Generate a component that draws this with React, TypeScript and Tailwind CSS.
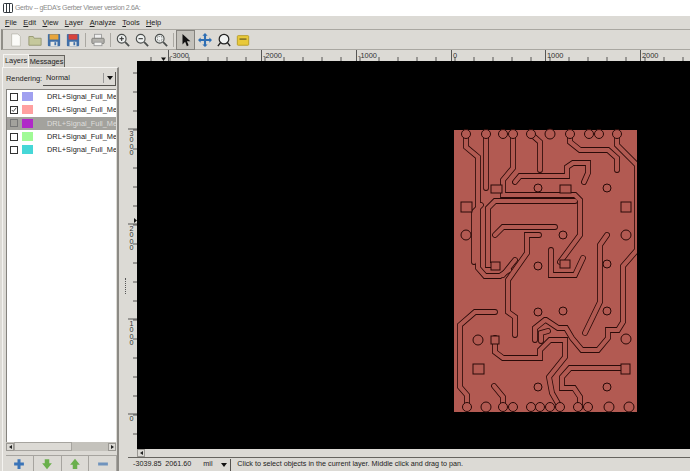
const font = "font-['Liberation_Sans',sans-serif]";

const layers = [
  { color: "bg-[#a0a0f0]", checked: false },
  { color: "bg-[#ffa0a0]", checked: true },
  { color: "bg-[#b028c8]", checked: false, selected: true },
  { color: "bg-[#a0fa96]", checked: false },
  { color: "bg-[#46d7d7]", checked: false },
];

const menus = [
  ["F", "ile"],
  ["E", "dit"],
  ["V", "iew"],
  ["L", "ayer"],
  ["A", "nalyze"],
  ["T", "ools"],
  ["H", "elp"],
];

// traces of the board, page coordinates
const traces = [
  "M466 134V147L478 157V268L485 276H500L509 270",
  "M486 134V188",
  "M513 134V168L503 180V195H575L580 200V235L560 262",
  "M575 201H495L488 208V265H495",
  "M481 205L474 212V262",
  "M531 134L540 142V170",
  "M570 134V142L580 150H608L617 158V170",
  "M617 134V145L637 165V250L623 266V322L618 330H608V338L598 350H582L572 338L566 328H558L546 320H545L535 328V340",
  "M515 182L520 176H567V167L573 163H588V173L584 182",
  "M495 235L503 227H555",
  "M539 235H527V253L515 270L508 280V312L515 317V335",
  "M515 260L503 275",
  "M551 250V275H575L583 258",
  "M607 235L600 245V302L585 333",
  "M495 312H475L460 325V387L467 395V407",
  "M495 338V352L503 358H540V350L550 340H565V357L549 377L552 393L560 407",
  "M622 368H570L562 377V388H574L580 397V407",
  "M494 386L503 397V407",
  "M548 331L541 333V341",
];

const circles = [
  [466, 134, 4.5], [486, 134, 4.5], [503, 134, 4.5], [513, 134, 4.5], [531, 134, 4.5], [550, 134, 5], [570, 134, 4.5], [589, 134, 4.5], [599, 134, 4.5], [617, 134, 4.5],
  [538, 188, 4], [607, 188, 4], [466, 235, 5], [563, 235, 4], [626, 235, 5], [538, 266, 4], [607, 264, 4],
  [538, 312, 4], [563, 311, 4], [607, 311, 4], [478, 340, 5], [626, 339, 5], [538, 387, 4], [607, 387, 4],
  [467, 407, 4.5], [486, 407, 5], [503, 407, 4.5], [513, 407, 4.5], [531, 407, 4.5], [540, 407, 4.5], [550, 407, 4.5], [560, 407, 4.5], [578, 407, 4.5], [588, 407, 4.5], [609, 407, 5], [629, 407, 5],
];

const pads = [
  [461, 202, 11, 10], [621, 202, 10, 10], [473, 364, 11, 10], [491, 185, 11, 8], [560, 185, 11, 8], [491, 262, 9, 8], [560, 260, 10, 8], [491, 336, 8, 8], [621, 364, 9, 10],
];

function Board() {
  return (
    <svg viewBox="137 61 553 388" className="block w-full h-full">
      <rect x="454" y="130" width="183" height="282" fill="#b25a52" />
      {traces.map((d, i) => (
        <path key={i} d={d} fill="none" stroke="#2a0a08" strokeWidth="5.8" strokeLinecap="round" />
      ))}
      {traces.map((d, i) => (
        <path key={i} d={d} fill="none" stroke="#b25a52" strokeWidth="4.2" strokeLinecap="round" />
      ))}
      {circles.map(([x, y, r], i) => (
        <circle key={i} cx={x} cy={y} r={r} fill="#b25a52" stroke="#2a0a08" strokeWidth="1" />
      ))}
      {pads.map(([x, y, w, h], i) => (
        <rect key={i} x={x} y={y} width={w} height={h} fill="#b25a52" stroke="#2a0a08" strokeWidth="1" />
      ))}
      <rect x="637" y="130" width="6" height="282" fill="#000" />
    </svg>
  );
}

function TopRuler() {
  const labels: [number, string][] = [[170, "-3000"], [263, "-2000"], [358, "-1000"], [453, "0"], [547, "1000"], [642, "2000"]];
  const ticks = [];
  for (let x = 151; x < 690; x += 19) ticks.push(x);
  return (
    <svg viewBox="137 50 553 11" className="block w-full h-full">
      {ticks.map((x) => (
        <line key={x} x1={x} x2={x} y1="57" y2="61" stroke="#333" strokeWidth="0.8" />
      ))}
      {labels.map(([x, t]) => (
        <g key={t}>
          <line x1={x - 1.5} x2={x - 1.5} y1="50" y2="61" stroke="#333" strokeWidth="0.8" />
          <text x={x} y="57.5" fontSize="7.4" fill="#333" fontFamily="Liberation Sans">{t}</text>
        </g>
      ))}
      <path d="M161 57.5h5l-2.5 3.5z" fill="#111" />
    </svg>
  );
}

function LeftRuler() {
  const labels: [number, string][] = [[129, "3000"], [224, "2000"], [319, "1000"], [414, "0"]];
  const ticks = [];
  for (let y = 73; y < 449; y += 19) ticks.push(y);
  return (
    <svg viewBox="128 61 9 388" className="block w-full h-full">
      {ticks.map((y) => (
        <line key={y} x1="133" x2="137" y1={y} y2={y} stroke="#333" strokeWidth="0.8" />
      ))}
      {labels.map(([y, t]) => (
        <g key={t}>
          <line x1="128" x2="137" y1={y} y2={y} stroke="#333" strokeWidth="0.8" />
          {t.split("").map((c, i) => (
            <text key={i} x="129.5" y={y + 7 + i * 6.3} fontSize="7.2" fill="#333" fontFamily="Liberation Sans">{c}</text>
          ))}
        </g>
      ))}
      <path d="M134 218v5l3-2.5z" fill="#111" />
    </svg>
  );
}

function ToolIcon({ children, active }: { children: React.ReactNode; active?: boolean }) {
  return (
    <div className={`w-[19px] h-[20px] shrink-0 flex items-center justify-center ${active ? "bg-[#c4c2bc] border border-[#85837e]" : ""}`}>
      <svg viewBox="0 0 16 16" className="w-[14px] h-[14px]">{children}</svg>
    </div>
  );
}

function Lens({ mark }: { mark: "plus" | "minus" | "fit" }) {
  return (
    <>
      <circle cx="6.5" cy="6.5" r="5" fill="#eef1f0" stroke="#4b4f4e" strokeWidth="1.3" />
      <path d="M10.5 10.5L15 15" stroke="#4b4f4e" strokeWidth="2" />
      {mark !== "fit" && <path d="M4 6.5h5" stroke="#333" strokeWidth="1.2" />}
      {mark === "plus" && <path d="M6.5 4v5" stroke="#333" strokeWidth="1.2" />}
      {mark === "fit" && <path d="M4 4h5v5H4z" fill="none" stroke="#777" strokeWidth="1" strokeDasharray="1 1" />}
    </>
  );
}

function Floppy({ tint }: { tint: string }) {
  return (
    <>
      <rect x="1" y="1" width="14" height="14" rx="1" fill="#3f6fa8" />
      <rect x="3" y="1.5" width="10" height="6" fill={tint} />
      <rect x="4" y="10" width="8" height="5" fill="#e8e8e4" />
      <rect x="8.5" y="10.5" width="2" height="3.5" fill="#3f6fa8" />
    </>
  );
}

function Separator() {
  return <div className="w-px h-[14px] bg-[#aaa8a2] mx-[2.5px] shrink-0" />;
}

function Toolbar() {
  return (
    <div className="h-[21px] flex items-center pl-[3px] border-y border-[#a9a7a1] ml-[1px] border-l-2 border-l-[#8f8d87] shrink-0">
      <ToolIcon><path d="M3 1h7l3 3v11H3z" fill="#fbfbf8" stroke="#bdbcb2" /></ToolIcon>
      <ToolIcon><path d="M1 4h5l1 2h8v8H1z" fill="#c5c89c" stroke="#94966f" /></ToolIcon>
      <ToolIcon><Floppy tint="#e8a53c" /></ToolIcon>
      <ToolIcon><Floppy tint="#d8433c" /></ToolIcon>
      <Separator />
      <ToolIcon>
        <rect x="4" y="1.5" width="8" height="5" fill="#eee" stroke="#999" />
        <rect x="1" y="6" width="14" height="6" rx="1" fill="#b2b1ac" stroke="#7c7b77" />
        <rect x="3.5" y="10.5" width="9" height="4" fill="#f2f2f0" stroke="#999" />
      </ToolIcon>
      <Separator />
      <ToolIcon><Lens mark="plus" /></ToolIcon>
      <ToolIcon><Lens mark="minus" /></ToolIcon>
      <ToolIcon><Lens mark="fit" /></ToolIcon>
      <Separator />
      <ToolIcon active>
        <path d="M4 1v12l3-3 2 5 2-1-2-4.5h4z" fill="#111" />
      </ToolIcon>
      <ToolIcon>
        <path d="M8 0l3 3H9.2v3.8H13V5l3 3-3 3V9.2H9.2V13H11l-3 3-3-3h1.8V9.2H3V11L0 8l3-3v1.8h3.8V3H5z" fill="#2f6fb4" />
      </ToolIcon>
      <ToolIcon>
        <circle cx="8" cy="7" r="5.5" fill="#f0f2f1" stroke="#222" strokeWidth="1.4" />
        <path d="M12 11l3 4M4 11l-3 4" stroke="#222" strokeWidth="1.6" />
      </ToolIcon>
      <ToolIcon>
        <rect x="1.5" y="3" width="13" height="11" rx="1" fill="#e9c93a" stroke="#b59a22" />
        <rect x="4" y="6" width="8" height="2" fill="#8a7a2a" />
      </ToolIcon>
    </div>
  );
}

function LayerRow({ color, checked, selected }: { color: string; checked: boolean; selected?: boolean }) {
  return (
    <div className={`h-[13.3px] flex items-center pl-[3px] overflow-hidden ${selected ? "bg-[#a3a29d]" : ""}`}>
      <div className={`w-[8px] h-[8px] shrink-0 border flex items-center justify-center ${selected ? "border-[#777] bg-[#a3a29d]" : "border-[#333] bg-white"}`}>
        {checked && (
          <svg viewBox="0 0 8 8" className="w-[6px] h-[6px]">
            <path d="M1 4l2 2 4-5" fill="none" stroke="#222" strokeWidth="1.1" />
          </svg>
        )}
      </div>
      <div className={`w-[11px] h-[9px] ml-[4px] shrink-0 ${color}`} />
      <span className={`ml-[14px] text-[7.4px] whitespace-nowrap ${selected ? "text-[#dedddb]" : "text-[#222]"}`}>
        DRL+Signal_Full_Mec
      </span>
    </div>
  );
}

function Arrowbox({ dir }: { dir: "left" | "right" }) {
  return (
    <div className="w-[8px] h-[8px] shrink-0 bg-[#dcdad5] border border-[#9a9893] flex items-center justify-center">
      <div className={`w-0 h-0 border-y-[2.5px] border-y-transparent ${dir === "left" ? "border-r-[3px] border-r-[#222]" : "border-l-[3px] border-l-[#222]"}`} />
    </div>
  );
}

function PanelButton({ children }: { children: React.ReactNode }) {
  return (
    <div className="flex-1 h-[16px] border-t border-r border-[#a6a49f] flex items-center justify-center">
      <svg viewBox="0 0 16 16" className="w-[12px] h-[12px]">{children}</svg>
    </div>
  );
}

function LeftPanel() {
  return (
    <div className="w-[125px] shrink-0 flex flex-col pl-[2px] pt-[4px]">
      <div className="flex items-end h-[13px] pl-[1px] text-[7.4px] text-[#222]">
        <div className="w-[26px] h-[13px] leading-[12px] text-center border-t border-x border-[#f4f3f0]">Layers</div>
        <div className="w-[36px] h-[12px] leading-[11px] text-center bg-[#cdcbc5] border-r border-t border-[#66645f]">Messages</div>
      </div>
      <div className="flex-1 w-[117px] flex flex-col border-l border-t border-[#f4f3f0] border-r-2 border-r-[#8c8a85] pl-[3px] pr-[1px] min-h-0">
        <div className="h-[21px] flex items-center text-[7.4px] text-[#222] shrink-0">
          <span className="w-[35px]">Rendering:</span>
          <div className="ml-[2px] w-[74px] h-[14px] flex items-center border-r border-b border-[#55534f] bg-[#dcdad5] pl-[3px]">
            <span className="flex-1">Normal</span>
            <div className="w-px h-[10px] bg-[#999]" />
            <div className="w-[11px] flex justify-center">
              <div className="w-0 h-0 border-x-[3.5px] border-x-transparent border-t-[4px] border-t-[#111]" />
            </div>
          </div>
        </div>
        <div className="flex-1 bg-white border-l border-t border-[#85837e] min-h-0 overflow-hidden w-[110px]">
          {layers.map((l, i) => (
            <LayerRow key={i} color={l.color} checked={l.checked} selected={l.selected} />
          ))}
        </div>
        <div className="h-[9px] flex items-center justify-between shrink-0 bg-[#c4c2bc] w-[110px] relative">
          <Arrowbox dir="left" />
          <div className="absolute left-[8px] top-0 w-[58px] h-[9px] bg-[#dcdad5] border border-[#a6a49f]" />
          <Arrowbox dir="right" />
        </div>
        <div className="h-[20px] flex items-end shrink-0 w-[111px] border-l-0">
          <PanelButton><path d="M6 1.5h4v4.5h4.5v4H10v4.5H6V10H1.5V6H6z" fill="#3a74b8" /></PanelButton>
          <PanelButton><path d="M5 1.5h6V7h3.5L8 15 1.5 7H5z" fill="#6ab04c" /></PanelButton>
          <PanelButton><path d="M5 14.5h6V9h3.5L8 1 1.5 9H5z" fill="#6ab04c" /></PanelButton>
          <PanelButton><rect x="1.5" y="6" width="13" height="4" fill="#6f93bd" /></PanelButton>
        </div>
      </div>
    </div>
  );
}

export default function App() {
  return (
    <div className={`w-[690px] h-[471px] overflow-hidden flex flex-col bg-[#dcdad5] ${font}`}>
      <div className="h-[16px] bg-white flex items-center pl-[3px] shrink-0">
        <div className="w-[10px] h-[10px] bg-[#33393f] rounded-[2px] grid grid-cols-3 gap-px p-px">
          <div className="bg-white" /><div className="bg-white" /><div className="bg-white" />
        </div>
        <span className="ml-[2px] text-[7px] tracking-[-0.35px] text-[#8b8b8b] whitespace-nowrap">Gerbv -- gEDA's Gerber Viewer version 2.6A:</span>
      </div>
      <div className="h-[13px] flex items-center pl-[5px] gap-[6.4px] text-[7.4px] text-[#222] shrink-0">
        {menus.map(([k, rest]) => (
          <span key={k}><u>{k}</u>{rest}</span>
        ))}
      </div>
      <Toolbar />
      <div className="flex-1 flex min-h-0">
        <LeftPanel />
        <div className="w-[3px] shrink-0 flex items-center">
          <div className="w-px h-[16px] border-l border-dotted border-[#555] mt-[50px]" />
        </div>
        <div className="flex-1 flex flex-col min-w-0">
          <div className="flex-1 grid grid-cols-[9px_1fr] grid-rows-[11px_1fr] min-h-0">
            <div />
            <TopRuler />
            <LeftRuler />
            <div className="bg-black min-h-0 overflow-hidden"><Board /></div>
          </div>
          <div className="h-[9px] shrink-0 flex items-center border-b border-[#66645f] pl-[9px]">
            <Arrowbox dir="left" />
          </div>
          <div className="h-[13px] shrink-0 flex items-center text-[7.2px] text-[#222] whitespace-nowrap pl-[5px]">
            <span>-3039.85&nbsp;&nbsp;2061.60</span>
            <div className="ml-[12px] w-[28px] h-[12px] flex items-center border-r border-[#55534f]">
              <span className="flex-1">mil</span>
              <div className="w-0 h-0 mr-[3px] border-x-[3.5px] border-x-transparent border-t-[4px] border-t-[#111]" />
            </div>
            <span className="ml-[6px]">Click to select objects in the current layer. Middle click and drag to pan.</span>
          </div>
        </div>
      </div>
    </div>
  );
}
